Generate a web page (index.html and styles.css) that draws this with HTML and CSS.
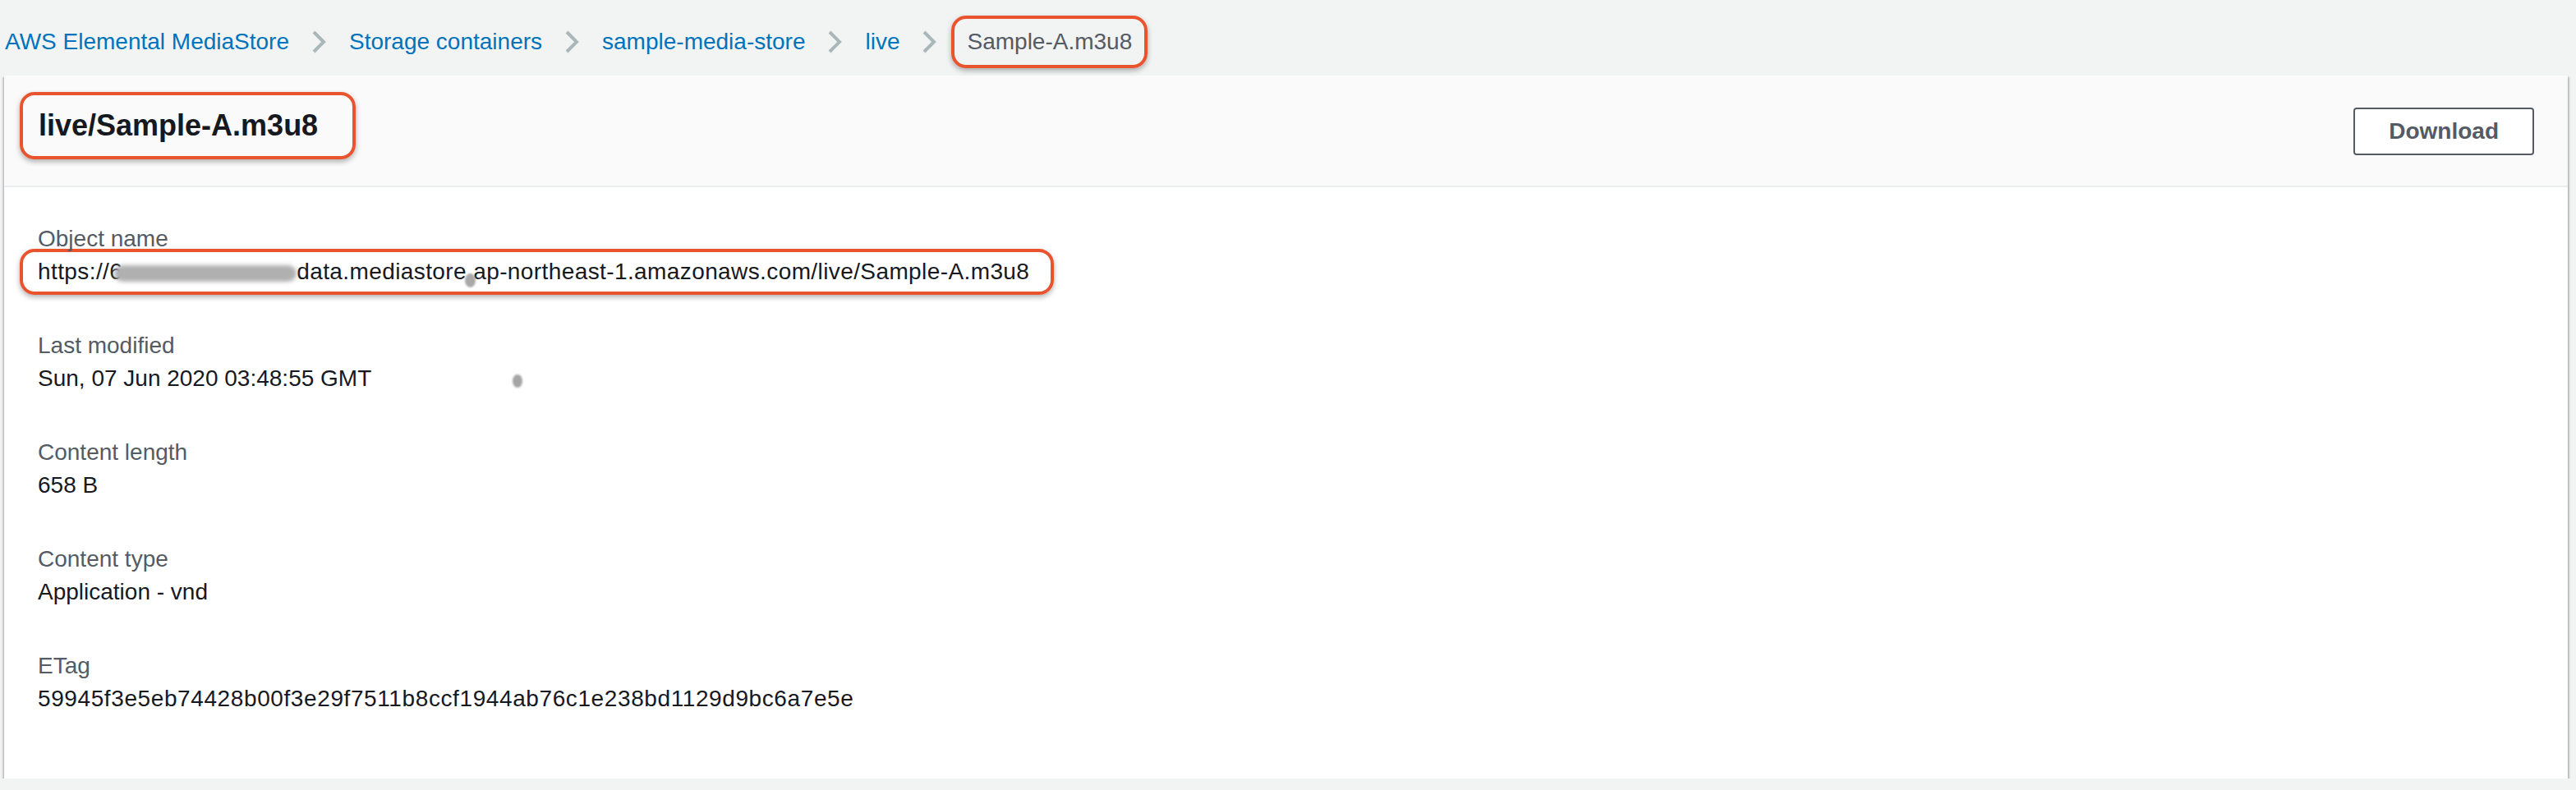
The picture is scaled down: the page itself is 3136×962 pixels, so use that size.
FILE: index.html
```html
<!DOCTYPE html>
<html lang="en">
<head>
  <meta charset="UTF-8">
  <meta name="viewport" content="width=device-width, initial-scale=1.0">
  <title>live/Sample-A.m3u8 | AWS Elemental MediaStore</title>
  <link rel="stylesheet" href="styles.css">
</head>
<body>

<nav class="breadcrumbs">
  <a href="#">AWS Elemental MediaStore</a>
  <svg class="chevron" width="17" height="28" viewBox="0 0 17 28"><polyline points="2,2 14,14 2,26" fill="none" stroke="#aab7b8" stroke-width="4"/></svg>
  <a href="#">Storage containers</a>
  <svg class="chevron" width="17" height="28" viewBox="0 0 17 28"><polyline points="2,2 14,14 2,26" fill="none" stroke="#aab7b8" stroke-width="4"/></svg>
  <a href="#">sample-media-store</a>
  <svg class="chevron" width="17" height="28" viewBox="0 0 17 28"><polyline points="2,2 14,14 2,26" fill="none" stroke="#aab7b8" stroke-width="4"/></svg>
  <a href="#">live</a>
  <svg class="chevron" width="17" height="28" viewBox="0 0 17 28"><polyline points="2,2 14,14 2,26" fill="none" stroke="#aab7b8" stroke-width="4"/></svg>
  <span class="current mark">Sample-A.m3u8</span>
</nav>

<div class="card">
  <div class="card-header">
    <h2 class="mark">live/Sample-A.m3u8</h2>
    <button class="btn">Download</button>
  </div>

  <div class="card-body">
    <div class="field">
      <div class="label">Object name</div>
      <div class="value mark url">https://6<span class="smear"></span>data.mediastore<span class="smudge">.</span>ap-northeast-1.amazonaws.com/live/Sample-A.m3u8</div>
    </div>

    <div class="field">
      <div class="label">Last modified</div>
      <div class="value">Sun, 07 Jun 2020 03:48:55 GMT<span class="dot"></span></div>
    </div>

    <div class="field">
      <div class="label">Content length</div>
      <div class="value">658 B</div>
    </div>

    <div class="field">
      <div class="label">Content type</div>
      <div class="value">Application - vnd</div>
    </div>

    <div class="field">
      <div class="label">ETag</div>
      <div class="value hash">59945f3e5eb74428b00f3e29f7511b8ccf1944ab76c1e238bd1129d9bc6a7e5e</div>
    </div>
  </div>
</div>

</body>
</html>
```

FILE: styles.css
```css
* {
  box-sizing: border-box;
}

body {
  font-family: "Liberation Sans", Arial, sans-serif;
  font-size: 28px;
  line-height: 40px;
  color: #16191f;
  background: #f2f3f3;
  margin: 0;
}

/* red annotation boxes */
.mark {
  border: 4px solid #e9542f;
  border-radius: 18px;
  box-shadow: 0 3px 6px rgba(0, 0, 0, 0.3);
}

.breadcrumbs {
  display: flex;
  align-items: center;
  gap: 28px;
  padding: 12px 0 0 6px;
  height: 90px;
}

.breadcrumbs a {
  color: #0073bb;
  text-decoration: none;
}

.chevron {
  display: block;
}

.current {
  color: #545b64;
  padding: 8px 15px 8px 15px;
  margin-left: -10px;
}

.card {
  background: #fff;
  margin: 2px 10px 0 5px;
  box-shadow: 0 2px 2px rgba(0, 28, 36, 0.3), 2px 2px 2px rgba(0, 28, 36, 0.2), -2px 2px 2px rgba(0, 28, 36, 0.15);
}

.card-header {
  display: flex;
  justify-content: space-between;
  align-items: flex-start;
  background: #fafafa;
  border-bottom: 2px solid #eaeded;
  padding: 20px 41px 32px 19px;
}

h2 {
  margin: 0;
  font-size: 36px;
  line-height: 44px;
  font-weight: bold;
  padding: 15px 42px 15px 19px;
}

.btn {
  margin-top: 19px;
  height: 58px;
  padding: 0 41px;
  background: #fff;
  border: 2px solid #545b64;
  border-radius: 4px;
  color: #545b64;
  font-family: inherit;
  font-size: 28px;
  font-weight: bold;
}

.card-body {
  padding: 43px 41px 77px 41px;
}

.field {
  margin-bottom: 50px;
}

.field:last-child {
  margin-bottom: 0;
}

.label {
  color: #545b64;
}

.url {
  width: fit-content;
  padding: 4px 26px 4px 18px;
  margin: -8px 0 -8px -22px;
  letter-spacing: 0.4px;
}

.smear {
  display: inline-block;
  width: 222px;
  height: 20px;
  margin-left: -10px;
  vertical-align: -3px;
  background: #b0b0b0;
  border-radius: 10px;
  filter: blur(2.5px);
}

.smudge {
  position: relative;
}

.smudge::after {
  content: "";
  position: absolute;
  left: -2px;
  top: 18px;
  width: 13px;
  height: 17px;
  border-radius: 50%;
  background: #a9a9a9;
  filter: blur(1px);
}

.dot {
  display: inline-block;
  width: 12px;
  height: 16px;
  margin-left: 172px;
  vertical-align: -2px;
  border-radius: 50%;
  background: #a5a5a5;
  filter: blur(1px);
}

.hash {
  letter-spacing: 0.6px;
}
```
